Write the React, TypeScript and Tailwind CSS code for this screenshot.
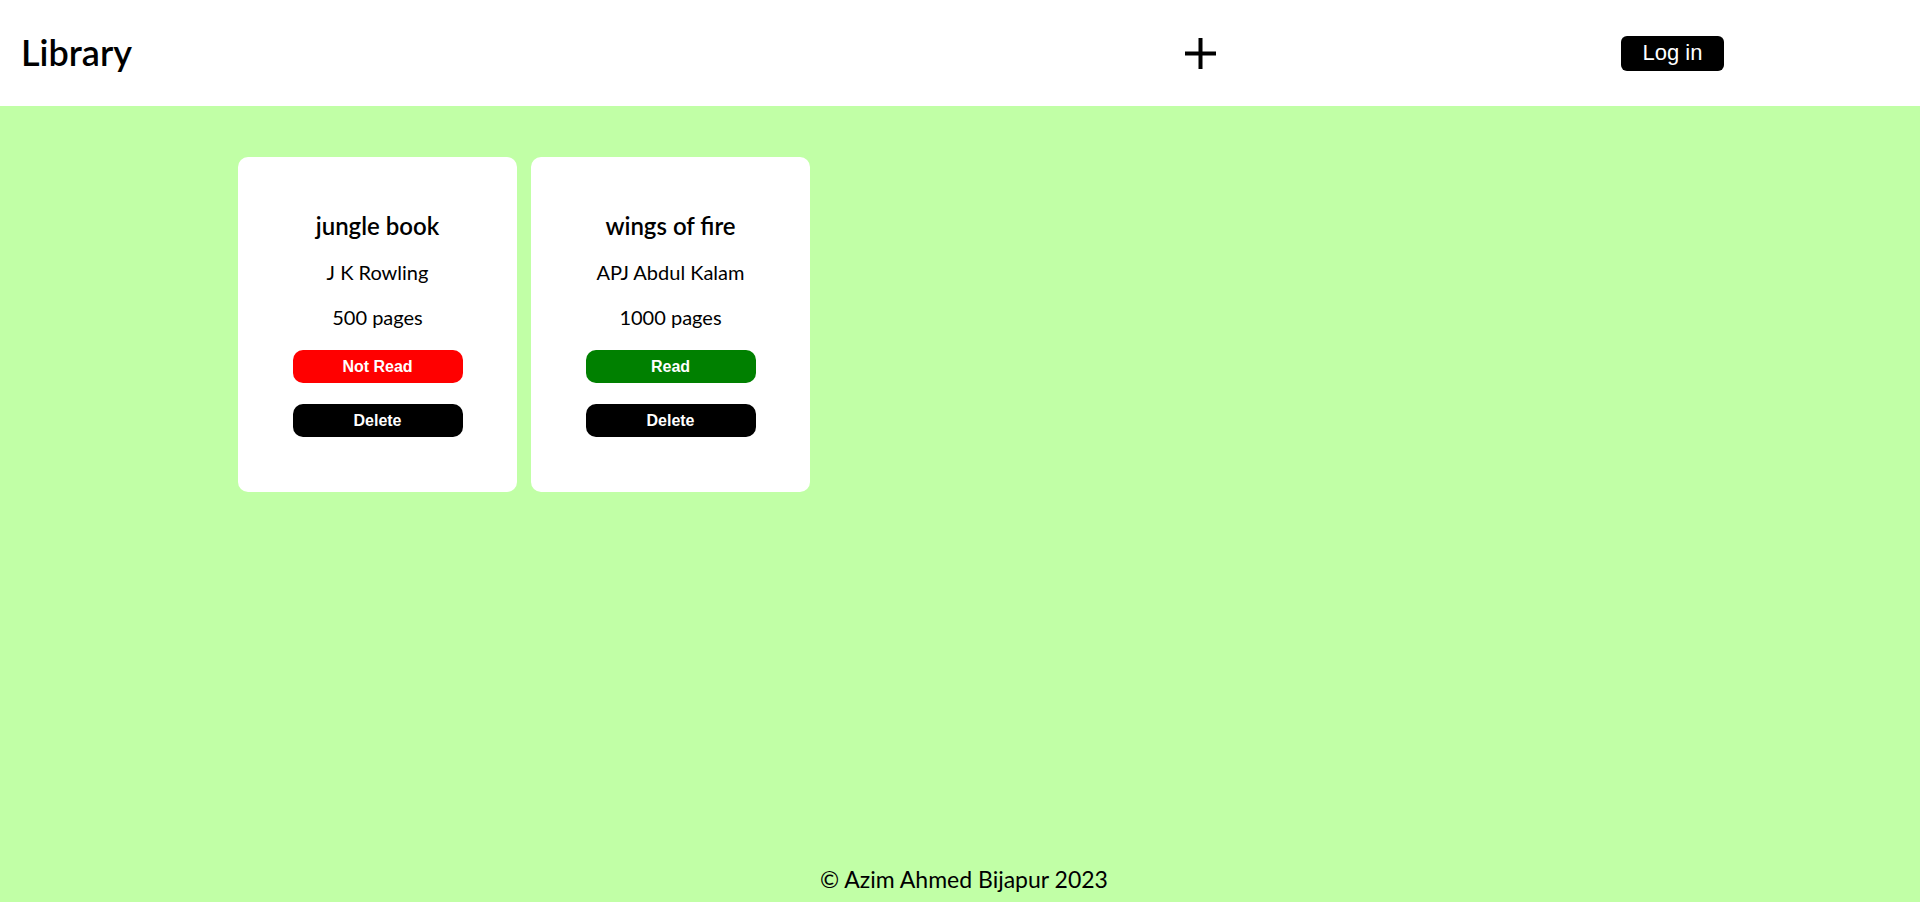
const books = [
    { title: "jungle book", author: "J K Rowling", pages: 500, read: false },
    { title: "wings of fire", author: "APJ Abdul Kalam", pages: 1000, read: true },
];

const BookCard = ({ title, author, pages, read }: { title: string; author: string; pages: number; read: boolean }) => {
    return (
        <div className="w-[279px] h-[335px] rounded-[10px] bg-white flex flex-col items-center pt-[51px] font-['Lato',sans-serif] text-black">
            <p className="text-[24px] leading-[36px] font-semibold">{title}</p>
            <p className="text-[20px] leading-[30px] mt-[13px]">{author}</p>
            <p className="text-[20px] leading-[30px] mt-[15px]">{pages} pages</p>

            <button
                className={`mt-[18px] w-[170px] h-[33px] rounded-[10px] text-white text-[16px] font-bold font-['Liberation_Sans',Arial,sans-serif] ${read ? "bg-[#008000]" : "bg-[#ff0000]"}`}
            >
                {read ? "Read" : "Not Read"}
            </button>
            <button className="mt-[21px] w-[170px] h-[33px] rounded-[10px] bg-black text-white text-[16px] font-bold font-['Liberation_Sans',Arial,sans-serif]">
                Delete
            </button>
        </div>
    );
};

const App = () => {
    return (
        <div className="min-h-screen flex flex-col bg-[#c1ffa6]">
            {/* header */}
            <div className="h-[106px] bg-white flex items-center pl-[21px]">
                <p className="font-['Lato',sans-serif] font-semibold text-[36px] leading-none w-[110px] pb-[2px]">Library</p>

                <button className="ml-[1054px] w-[31px] h-[31px] mt-[1px]" aria-label="add book">
                    <svg width="31" height="31" viewBox="0 0 31 31">
                        <rect x="13.5" y="0" width="4" height="31" fill="black" />
                        <rect x="0" y="13.5" width="31" height="4" fill="black" />
                    </svg>
                </button>

                <button className="ml-[405px] w-[103px] h-[35px] rounded-[6px] bg-black text-white text-[22px] font-['Liberation_Sans',Arial,sans-serif] leading-none">
                    Log in
                </button>
            </div>

            {/* books */}
            <div className="flex-1 flex items-start gap-[14px] pl-[238px] pt-[51px]">
                {books.map((b) => (
                    <BookCard key={b.title} {...b} />
                ))}
            </div>

            <div className="h-[44px] flex items-center justify-center pl-[8px] pb-[2px] font-['Lato',sans-serif] text-[23px] text-black">
                © Azim Ahmed Bijapur 2023
            </div>
        </div>
    );
};

export default App;
